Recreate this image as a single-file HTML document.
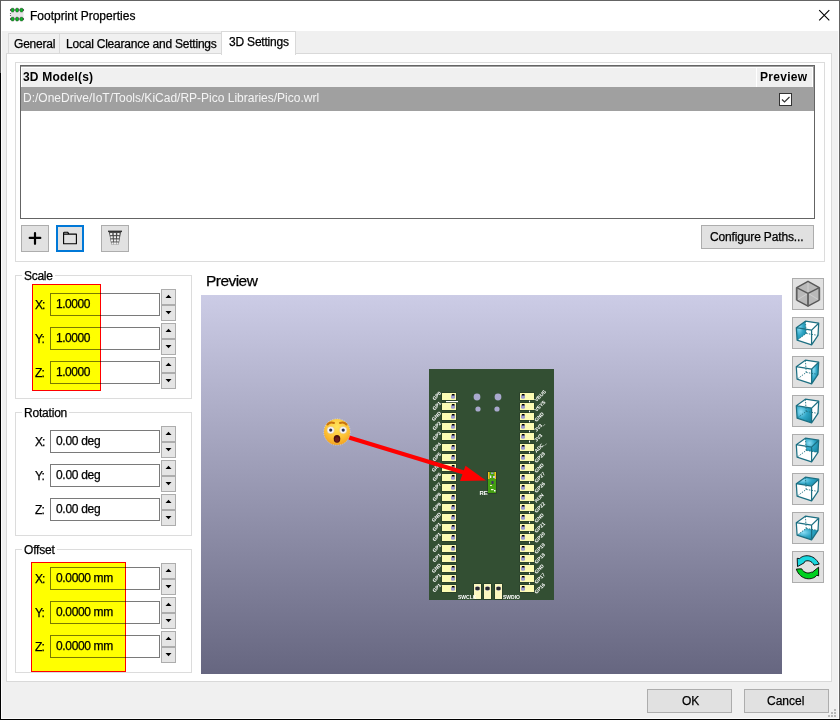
<!DOCTYPE html>
<html><head><meta charset="utf-8">
<style>
*{box-sizing:border-box;margin:0;padding:0}
html,body{width:840px;height:720px;overflow:hidden;background:#f0f0f0}
body{position:relative;font-family:"Liberation Sans",sans-serif;font-size:12px;color:#000}
.a{position:absolute}
.t{position:absolute;white-space:nowrap;line-height:14px;-webkit-text-stroke-width:0.25px}
.lbl{-webkit-text-stroke-width:0.25px}
.btn{position:absolute;background:#e1e1e1;border:1px solid #adadad}
.sbox{position:absolute;border:1px solid #dcdcdc}
.lbl{position:absolute;background:#fff;padding:0 2px;line-height:14px;white-space:nowrap}
.inp{position:absolute;background:#fff;border:1px solid #7a7a7a;width:110px;height:23px}

.hl{position:absolute;background:#ffff00;border:1px solid #ff0000;mix-blend-mode:multiply}
.tb{position:absolute;left:792px;width:32px;height:32px;background:#e1e1e1;border:1px solid #adadad}
</style></head><body>
<!-- window frame -->
<div class="a" style="left:0;top:0;width:840px;height:31px;background:#fff"></div>
<div class="a" style="left:0;top:0;width:840px;height:1px;background:#646464"></div>
<div class="a" style="left:839px;top:0;width:1px;height:720px;background:#646464"></div>
<div class="a" style="left:0;top:0;width:1px;height:73px;background:#5a5a5a"></div>
<div class="a" style="left:0;top:73px;width:1px;height:647px;background:#000"></div>
<div class="a" style="left:0;top:719px;width:840px;height:1px;background:#000"></div>
<div class="a" style="left:1px;top:31px;width:1px;height:688px;background:#fbfbfb"></div>
<div class="a" style="left:838px;top:31px;width:1px;height:688px;background:#fbfbfb"></div>
<div class="a" style="left:1px;top:718px;width:838px;height:1px;background:#fbfbfb"></div>

<!-- title icon -->
<svg class="a" style="left:9px;top:7px" width="16" height="16" viewBox="0 0 16 16">
<rect x="1.5" y="5" width="13" height="6" fill="#e6e6e6"/>
<circle cx="1.5" cy="6.5" r="0.6" fill="#555"/><circle cx="1.5" cy="8.5" r="0.6" fill="#555"/>
<path d="M0.8 3L2 2V4Z M15.2 3L14 2V4Z M0.8 12L2 11V13Z M15.2 12L14 11V13Z" fill="#3a3a3a"/>
<rect x="1" y="2.5" width="14" height="1" fill="#3a3a3a"/><rect x="1" y="11.5" width="14" height="1" fill="#3a3a3a"/>
<g fill="#00c81e" stroke="#2f3f2f" stroke-width="0.6"><rect x="2.3" y="1.3" width="2.6" height="3.6" rx="0.6"/><rect x="6.8" y="1.3" width="2.6" height="3.6" rx="0.6"/><rect x="11.2" y="1.3" width="2.6" height="3.6" rx="0.6"/>
<rect x="2.3" y="10.3" width="2.6" height="3.6" rx="0.6"/><rect x="6.8" y="10.3" width="2.6" height="3.6" rx="0.6"/><rect x="11.2" y="10.3" width="2.6" height="3.6" rx="0.6"/></g>
</svg>
<div class="t" style="left:30px;top:9px">Footprint Properties</div>
<svg class="a" style="left:818px;top:9px" width="13" height="13" viewBox="0 0 13 13"><path d="M1.2 1.2L11.3 11.3M11.3 1.2L1.2 11.3" stroke="#000" stroke-width="1.1"/></svg>

<!-- tabs -->
<div class="a" style="left:8px;top:33px;width:52px;height:21px;background:#f0f0f0;border:1px solid #d9d9d9;border-bottom:none"></div>
<div class="a" style="left:59px;top:33px;width:163px;height:21px;background:#f0f0f0;border:1px solid #d9d9d9;border-bottom:none"></div>
<div class="t" style="left:14px;top:37px;letter-spacing:-0.2px">General</div>
<div class="t" style="left:66px;top:37px;letter-spacing:-0.22px">Local Clearance and Settings</div>
<!-- panel -->
<div class="a" style="left:6px;top:53px;width:826px;height:629px;background:#fff;border:1px solid #d9d9d9"></div>
<div class="a" style="left:221px;top:31px;width:75px;height:24px;background:#fff;border:1px solid #d9d9d9;border-bottom:none"></div>
<div class="t" style="left:229px;top:35px;letter-spacing:-0.2px">3D Settings</div>

<!-- models static box -->
<div class="sbox" style="left:15px;top:62px;width:810px;height:200px"></div>
<!-- grid -->
<div class="a" style="left:20px;top:65px;width:795px;height:154px;background:#fff;border:1px solid #646464"></div>
<div class="a" style="left:21px;top:66px;width:793px;height:1px;background:#a0a0a0"></div>
<div class="a" style="left:813px;top:66px;width:1px;height:21px;background:#a0a0a0"></div>
<div class="a" style="left:22px;top:68px;width:790px;height:19px;background:#f0f0f0"></div>
<div class="a" style="left:756px;top:68px;width:1px;height:19px;background:#fff"></div>
<div class="t" style="left:23px;top:70px;font-weight:bold;letter-spacing:0.2px;-webkit-text-stroke-width:0">3D Model(s)</div>
<div class="t" style="left:760px;top:70px;font-weight:bold;letter-spacing:0.3px;-webkit-text-stroke-width:0">Preview</div>
<div class="a" style="left:21px;top:87px;width:793px;height:24px;background:#a0a0a0"></div>
<div class="t" style="left:23px;top:91px;color:#f4f4f4;-webkit-text-stroke-width:0">D:/OneDrive/IoT/Tools/KiCad/RP-Pico Libraries/Pico.wrl</div>
<div class="a" style="left:779px;top:93px;width:13px;height:13px;background:#fff;border:1px solid #333"></div>
<svg class="a" style="left:779px;top:93px" width="13" height="13" viewBox="0 0 13 13"><path d="M3 6.5L5.5 9L10.5 4" stroke="#333" stroke-width="1.2" fill="none"/></svg>

<!-- list buttons -->
<div class="btn" style="left:21px;top:225px;width:28px;height:27px"></div>
<svg class="a" style="left:21px;top:225px" width="28" height="27" viewBox="0 0 28 27"><path d="M14 8.2V18.8M8.7 12.9H19.3" stroke="#000" stroke-width="2.2" stroke-linecap="round"/></svg>
<div class="btn" style="left:56px;top:225px;width:28px;height:27px;border:2px solid #0078d7"></div>
<svg class="a" style="left:56px;top:225px" width="28" height="27" viewBox="0 0 28 27"><path d="M7.6 9.1H20.4V18.7H7.6Z M7.6 9.1V8.1Q7.6 7.3 8.4 7.3H11.8L12.9 9.1" stroke="#000" stroke-width="1.1" fill="none" stroke-linejoin="round"/></svg>
<div class="btn" style="left:101px;top:225px;width:28px;height:27px"></div>
<svg class="a" style="left:101px;top:225px" width="28" height="27" viewBox="0 0 28 27"><rect x="7" y="5.6" width="14" height="1.5" fill="#333"/><path d="M7.9 7H20.1L17.7 19.6H10.3Z" fill="#4a4a4a"/><rect x="9.1" y="8.0" width="2.2" height="2.1" fill="#eee"/><rect x="12.7" y="8.0" width="2.2" height="2.1" fill="#eee"/><rect x="16.3" y="8.0" width="2.2" height="2.1" fill="#eee"/><rect x="9.5" y="11.2" width="2.2" height="2.1" fill="#eee"/><rect x="12.8" y="11.2" width="2.2" height="2.1" fill="#eee"/><rect x="16.0" y="11.2" width="2.2" height="2.1" fill="#eee"/><rect x="9.9" y="14.4" width="2.2" height="2.1" fill="#eee"/><rect x="12.9" y="14.4" width="2.2" height="2.1" fill="#eee"/><rect x="15.7" y="14.4" width="2.2" height="2.1" fill="#eee"/><rect x="10.4" y="17.4" width="2.2" height="2.1" fill="#eee"/><rect x="12.9" y="17.4" width="2.2" height="2.1" fill="#eee"/><rect x="15.4" y="17.4" width="2.2" height="2.1" fill="#eee"/></svg>

<div class="btn" style="left:701px;top:225px;width:113px;height:24px"></div>
<div class="t" style="left:710px;top:230px;letter-spacing:-0.15px">Configure Paths...</div>

<!-- Scale -->
<div class="sbox" style="left:15px;top:275px;width:177px;height:124px"></div>
<div class="lbl" style="left:22px;top:269px;letter-spacing:-0.3px">Scale</div>
<!-- Rotation -->
<div class="sbox" style="left:15px;top:412px;width:177px;height:124px"></div>
<div class="lbl" style="left:22px;top:406px;letter-spacing:-0.2px">Rotation</div>
<!-- Offset -->
<div class="sbox" style="left:15px;top:549px;width:177px;height:124px"></div>
<div class="lbl" style="left:22px;top:543px;letter-spacing:-0.2px">Offset</div>

<div class="t" style="left:35px;top:298px;letter-spacing:-0.9px">X:</div>
<div class="inp" style="left:50px;top:293px"></div>
<div class="t" style="left:56px;top:297px;letter-spacing:-0.45px">1.0000</div>
<svg class="a" style="left:161px;top:289px" width="15" height="32" viewBox="0 0 15 32"><rect x="0.5" y="0.5" width="14" height="15" fill="#e5e5e5" stroke="#adadad"/><rect x="0.5" y="16.5" width="14" height="15" fill="#e5e5e5" stroke="#adadad"/><path d="M4.5 9H10.5L7.5 5.8Z" fill="#000"/><path d="M4.5 22H10.5L7.5 25.2Z" fill="#000"/></svg>
<div class="t" style="left:35px;top:332px;letter-spacing:-0.9px">Y:</div>
<div class="inp" style="left:50px;top:327px"></div>
<div class="t" style="left:56px;top:331px;letter-spacing:-0.45px">1.0000</div>
<svg class="a" style="left:161px;top:323px" width="15" height="32" viewBox="0 0 15 32"><rect x="0.5" y="0.5" width="14" height="15" fill="#e5e5e5" stroke="#adadad"/><rect x="0.5" y="16.5" width="14" height="15" fill="#e5e5e5" stroke="#adadad"/><path d="M4.5 9H10.5L7.5 5.8Z" fill="#000"/><path d="M4.5 22H10.5L7.5 25.2Z" fill="#000"/></svg>
<div class="t" style="left:35px;top:366px;letter-spacing:-0.9px">Z:</div>
<div class="inp" style="left:50px;top:361px"></div>
<div class="t" style="left:56px;top:365px;letter-spacing:-0.45px">1.0000</div>
<svg class="a" style="left:161px;top:357px" width="15" height="32" viewBox="0 0 15 32"><rect x="0.5" y="0.5" width="14" height="15" fill="#e5e5e5" stroke="#adadad"/><rect x="0.5" y="16.5" width="14" height="15" fill="#e5e5e5" stroke="#adadad"/><path d="M4.5 9H10.5L7.5 5.8Z" fill="#000"/><path d="M4.5 22H10.5L7.5 25.2Z" fill="#000"/></svg>
<div class="t" style="left:35px;top:435px;letter-spacing:-0.9px">X:</div>
<div class="inp" style="left:50px;top:430px"></div>
<div class="t" style="left:56px;top:434px;letter-spacing:-0.3px">0.00 deg</div>
<svg class="a" style="left:161px;top:426px" width="15" height="32" viewBox="0 0 15 32"><rect x="0.5" y="0.5" width="14" height="15" fill="#e5e5e5" stroke="#adadad"/><rect x="0.5" y="16.5" width="14" height="15" fill="#e5e5e5" stroke="#adadad"/><path d="M4.5 9H10.5L7.5 5.8Z" fill="#000"/><path d="M4.5 22H10.5L7.5 25.2Z" fill="#000"/></svg>
<div class="t" style="left:35px;top:469px;letter-spacing:-0.9px">Y:</div>
<div class="inp" style="left:50px;top:464px"></div>
<div class="t" style="left:56px;top:468px;letter-spacing:-0.3px">0.00 deg</div>
<svg class="a" style="left:161px;top:460px" width="15" height="32" viewBox="0 0 15 32"><rect x="0.5" y="0.5" width="14" height="15" fill="#e5e5e5" stroke="#adadad"/><rect x="0.5" y="16.5" width="14" height="15" fill="#e5e5e5" stroke="#adadad"/><path d="M4.5 9H10.5L7.5 5.8Z" fill="#000"/><path d="M4.5 22H10.5L7.5 25.2Z" fill="#000"/></svg>
<div class="t" style="left:35px;top:503px;letter-spacing:-0.9px">Z:</div>
<div class="inp" style="left:50px;top:498px"></div>
<div class="t" style="left:56px;top:502px;letter-spacing:-0.3px">0.00 deg</div>
<svg class="a" style="left:161px;top:494px" width="15" height="32" viewBox="0 0 15 32"><rect x="0.5" y="0.5" width="14" height="15" fill="#e5e5e5" stroke="#adadad"/><rect x="0.5" y="16.5" width="14" height="15" fill="#e5e5e5" stroke="#adadad"/><path d="M4.5 9H10.5L7.5 5.8Z" fill="#000"/><path d="M4.5 22H10.5L7.5 25.2Z" fill="#000"/></svg>
<div class="t" style="left:35px;top:572px;letter-spacing:-0.9px">X:</div>
<div class="inp" style="left:50px;top:567px"></div>
<div class="t" style="left:56px;top:571px;letter-spacing:-0.35px">0.0000 mm</div>
<svg class="a" style="left:161px;top:563px" width="15" height="32" viewBox="0 0 15 32"><rect x="0.5" y="0.5" width="14" height="15" fill="#e5e5e5" stroke="#adadad"/><rect x="0.5" y="16.5" width="14" height="15" fill="#e5e5e5" stroke="#adadad"/><path d="M4.5 9H10.5L7.5 5.8Z" fill="#000"/><path d="M4.5 22H10.5L7.5 25.2Z" fill="#000"/></svg>
<div class="t" style="left:35px;top:606px;letter-spacing:-0.9px">Y:</div>
<div class="inp" style="left:50px;top:601px"></div>
<div class="t" style="left:56px;top:605px;letter-spacing:-0.35px">0.0000 mm</div>
<svg class="a" style="left:161px;top:597px" width="15" height="32" viewBox="0 0 15 32"><rect x="0.5" y="0.5" width="14" height="15" fill="#e5e5e5" stroke="#adadad"/><rect x="0.5" y="16.5" width="14" height="15" fill="#e5e5e5" stroke="#adadad"/><path d="M4.5 9H10.5L7.5 5.8Z" fill="#000"/><path d="M4.5 22H10.5L7.5 25.2Z" fill="#000"/></svg>
<div class="t" style="left:35px;top:640px;letter-spacing:-0.9px">Z:</div>
<div class="inp" style="left:50px;top:635px"></div>
<div class="t" style="left:56px;top:639px;letter-spacing:-0.35px">0.0000 mm</div>
<svg class="a" style="left:161px;top:631px" width="15" height="32" viewBox="0 0 15 32"><rect x="0.5" y="0.5" width="14" height="15" fill="#e5e5e5" stroke="#adadad"/><rect x="0.5" y="16.5" width="14" height="15" fill="#e5e5e5" stroke="#adadad"/><path d="M4.5 9H10.5L7.5 5.8Z" fill="#000"/><path d="M4.5 22H10.5L7.5 25.2Z" fill="#000"/></svg>
<div class="hl" style="left:32px;top:284px;width:69px;height:107px"></div>
<div class="hl" style="left:31px;top:562px;width:95px;height:110px"></div>

<!-- preview -->
<div class="t" style="left:206px;top:272px;font-size:15.5px;line-height:17px;letter-spacing:-0.55px">Preview</div>
<div class="a" style="left:201px;top:295px;width:581px;height:379px;background:linear-gradient(#cccce6,#666680)"></div>

<!-- toolbar -->
<svg class="a" style="left:0;top:0" width="840" height="720" viewBox="0 0 840 720">
<defs><radialGradient id="face" cx="0.5" cy="0.3" r="0.8"><stop offset="0" stop-color="#ffe45c"/><stop offset="0.55" stop-color="#fdc236"/><stop offset="1" stop-color="#f0961a"/></radialGradient></defs>
<rect x="429" y="369" width="125" height="231" fill="#334f33"/>
<rect x="441.5" y="392.5" width="15" height="8" fill="#223622"/>
<rect x="442" y="393" width="14" height="7" fill="#fcfcb4"/>
<rect x="451" y="394.8" width="4" height="4" rx="1.3" fill="#9c9ccc"/>
<rect x="451.8" y="394" width="2.8" height="1.5" rx="0.5" fill="#000"/>
<rect x="519.5" y="392.5" width="15" height="8" fill="#223622"/>
<rect x="520" y="393" width="14" height="7" fill="#fcfcb4"/>
<rect x="521" y="394.8" width="4" height="4" rx="1.3" fill="#9c9ccc"/>
<rect x="521.8" y="394" width="2.8" height="1.5" rx="0.5" fill="#000"/>
<text x="0" y="0" transform="translate(441.5 393.5) rotate(-45)" font-size="5" font-weight="bold" fill="#fff" text-anchor="end" font-family="Liberation Sans">GP0</text>
<text x="0" y="0" transform="translate(536.5 402) rotate(-45)" font-size="5" font-weight="bold" fill="#fff" font-family="Liberation Sans">VBUS</text>
<rect x="529" y="400.6" width="1" height="2" fill="#fff"/>
<rect x="441.5" y="402.5" width="15" height="8" fill="#223622"/>
<rect x="442" y="403" width="14" height="7" fill="#fcfcb4"/>
<rect x="451" y="404.8" width="4" height="4" rx="1.3" fill="#9c9ccc"/>
<rect x="451.8" y="404" width="2.8" height="1.5" rx="0.5" fill="#000"/>
<rect x="519.5" y="402.5" width="15" height="8" fill="#223622"/>
<rect x="520" y="403" width="14" height="7" fill="#fcfcb4"/>
<rect x="521" y="404.8" width="4" height="4" rx="1.3" fill="#9c9ccc"/>
<rect x="521.8" y="404" width="2.8" height="1.5" rx="0.5" fill="#000"/>
<text x="0" y="0" transform="translate(441.5 403.5) rotate(-45)" font-size="5" font-weight="bold" fill="#fff" text-anchor="end" font-family="Liberation Sans">GP1</text>
<text x="0" y="0" transform="translate(536.5 412) rotate(-45)" font-size="5" font-weight="bold" fill="#fff" font-family="Liberation Sans">VSYS</text>
<rect x="529" y="410.6" width="1" height="2" fill="#fff"/>
<rect x="441.5" y="412.5" width="15" height="8" fill="#223622"/>
<rect x="442" y="413" width="14" height="7" fill="#fcfcb4"/>
<rect x="451" y="414.8" width="4" height="4" rx="1.3" fill="#9c9ccc"/>
<rect x="451.8" y="414" width="2.8" height="1.5" rx="0.5" fill="#000"/>
<rect x="519.5" y="412.5" width="15" height="8" fill="#223622"/>
<rect x="520" y="413" width="14" height="7" fill="#fcfcb4"/>
<rect x="521" y="414.8" width="4" height="4" rx="1.3" fill="#9c9ccc"/>
<rect x="521.8" y="414" width="2.8" height="1.5" rx="0.5" fill="#000"/>
<text x="0" y="0" transform="translate(441.5 413.5) rotate(-45)" font-size="5" font-weight="bold" fill="#fff" text-anchor="end" font-family="Liberation Sans">GND</text>
<text x="0" y="0" transform="translate(536.5 422) rotate(-45)" font-size="5" font-weight="bold" fill="#fff" font-family="Liberation Sans">GND</text>
<rect x="529" y="420.6" width="1" height="2" fill="#fff"/>
<rect x="441.5" y="422.5" width="15" height="8" fill="#223622"/>
<rect x="442" y="423" width="14" height="7" fill="#fcfcb4"/>
<rect x="451" y="424.8" width="4" height="4" rx="1.3" fill="#9c9ccc"/>
<rect x="451.8" y="424" width="2.8" height="1.5" rx="0.5" fill="#000"/>
<rect x="519.5" y="422.5" width="15" height="8" fill="#223622"/>
<rect x="520" y="423" width="14" height="7" fill="#fcfcb4"/>
<rect x="521" y="424.8" width="4" height="4" rx="1.3" fill="#9c9ccc"/>
<rect x="521.8" y="424" width="2.8" height="1.5" rx="0.5" fill="#000"/>
<text x="0" y="0" transform="translate(441.5 423.5) rotate(-45)" font-size="5" font-weight="bold" fill="#fff" text-anchor="end" font-family="Liberation Sans">GP2</text>
<text x="0" y="0" transform="translate(536.5 432) rotate(-45)" font-size="5" font-weight="bold" fill="#fff" font-family="Liberation Sans">3V3_</text>
<rect x="529" y="430.6" width="1" height="2" fill="#fff"/>
<rect x="441.5" y="432.5" width="15" height="8" fill="#223622"/>
<rect x="442" y="433" width="14" height="7" fill="#fcfcb4"/>
<rect x="451" y="434.8" width="4" height="4" rx="1.3" fill="#9c9ccc"/>
<rect x="451.8" y="434" width="2.8" height="1.5" rx="0.5" fill="#000"/>
<rect x="519.5" y="432.5" width="15" height="8" fill="#223622"/>
<rect x="520" y="433" width="14" height="7" fill="#fcfcb4"/>
<rect x="521" y="434.8" width="4" height="4" rx="1.3" fill="#9c9ccc"/>
<rect x="521.8" y="434" width="2.8" height="1.5" rx="0.5" fill="#000"/>
<text x="0" y="0" transform="translate(441.5 433.5) rotate(-45)" font-size="5" font-weight="bold" fill="#fff" text-anchor="end" font-family="Liberation Sans">GP3</text>
<text x="0" y="0" transform="translate(536.5 442) rotate(-45)" font-size="5" font-weight="bold" fill="#fff" font-family="Liberation Sans">3V3</text>
<rect x="529" y="440.6" width="1" height="2" fill="#fff"/>
<rect x="441.5" y="443.5" width="15" height="8" fill="#223622"/>
<rect x="442" y="444" width="14" height="7" fill="#fcfcb4"/>
<rect x="451" y="445.8" width="4" height="4" rx="1.3" fill="#9c9ccc"/>
<rect x="451.8" y="445" width="2.8" height="1.5" rx="0.5" fill="#000"/>
<rect x="519.5" y="443.5" width="15" height="8" fill="#223622"/>
<rect x="520" y="444" width="14" height="7" fill="#fcfcb4"/>
<rect x="521" y="445.8" width="4" height="4" rx="1.3" fill="#9c9ccc"/>
<rect x="521.8" y="445" width="2.8" height="1.5" rx="0.5" fill="#000"/>
<text x="0" y="0" transform="translate(441.5 444.5) rotate(-45)" font-size="5" font-weight="bold" fill="#fff" text-anchor="end" font-family="Liberation Sans">GP4</text>
<text x="0" y="0" transform="translate(536.5 453) rotate(-45)" font-size="5" font-weight="bold" fill="#fff" font-family="Liberation Sans">ADC_</text>
<rect x="529" y="451.6" width="1" height="2" fill="#fff"/>
<rect x="441.5" y="453.5" width="15" height="8" fill="#223622"/>
<rect x="442" y="454" width="14" height="7" fill="#fcfcb4"/>
<rect x="451" y="455.8" width="4" height="4" rx="1.3" fill="#9c9ccc"/>
<rect x="451.8" y="455" width="2.8" height="1.5" rx="0.5" fill="#000"/>
<rect x="519.5" y="453.5" width="15" height="8" fill="#223622"/>
<rect x="520" y="454" width="14" height="7" fill="#fcfcb4"/>
<rect x="521" y="455.8" width="4" height="4" rx="1.3" fill="#9c9ccc"/>
<rect x="521.8" y="455" width="2.8" height="1.5" rx="0.5" fill="#000"/>
<text x="0" y="0" transform="translate(441.5 454.5) rotate(-45)" font-size="5" font-weight="bold" fill="#fff" text-anchor="end" font-family="Liberation Sans">GP5</text>
<text x="0" y="0" transform="translate(536.5 463) rotate(-45)" font-size="5" font-weight="bold" fill="#fff" font-family="Liberation Sans">GP28</text>
<rect x="529" y="461.6" width="1" height="2" fill="#fff"/>
<rect x="441.5" y="463.5" width="15" height="8" fill="#223622"/>
<rect x="442" y="464" width="14" height="7" fill="#fcfcb4"/>
<rect x="451" y="465.8" width="4" height="4" rx="1.3" fill="#9c9ccc"/>
<rect x="451.8" y="465" width="2.8" height="1.5" rx="0.5" fill="#000"/>
<rect x="519.5" y="463.5" width="15" height="8" fill="#223622"/>
<rect x="520" y="464" width="14" height="7" fill="#fcfcb4"/>
<rect x="521" y="465.8" width="4" height="4" rx="1.3" fill="#9c9ccc"/>
<rect x="521.8" y="465" width="2.8" height="1.5" rx="0.5" fill="#000"/>
<text x="0" y="0" transform="translate(441.5 464.5) rotate(-45)" font-size="5" font-weight="bold" fill="#fff" text-anchor="end" font-family="Liberation Sans">GND</text>
<text x="0" y="0" transform="translate(536.5 473) rotate(-45)" font-size="5" font-weight="bold" fill="#fff" font-family="Liberation Sans">GND</text>
<rect x="529" y="471.6" width="1" height="2" fill="#fff"/>
<rect x="441.5" y="473.5" width="15" height="8" fill="#223622"/>
<rect x="442" y="474" width="14" height="7" fill="#fcfcb4"/>
<rect x="451" y="475.8" width="4" height="4" rx="1.3" fill="#9c9ccc"/>
<rect x="451.8" y="475" width="2.8" height="1.5" rx="0.5" fill="#000"/>
<rect x="519.5" y="473.5" width="15" height="8" fill="#223622"/>
<rect x="520" y="474" width="14" height="7" fill="#fcfcb4"/>
<rect x="521" y="475.8" width="4" height="4" rx="1.3" fill="#9c9ccc"/>
<rect x="521.8" y="475" width="2.8" height="1.5" rx="0.5" fill="#000"/>
<text x="0" y="0" transform="translate(441.5 474.5) rotate(-45)" font-size="5" font-weight="bold" fill="#fff" text-anchor="end" font-family="Liberation Sans">GP6</text>
<text x="0" y="0" transform="translate(536.5 483) rotate(-45)" font-size="5" font-weight="bold" fill="#fff" font-family="Liberation Sans">GP27</text>
<rect x="529" y="481.6" width="1" height="2" fill="#fff"/>
<rect x="441.5" y="483.5" width="15" height="8" fill="#223622"/>
<rect x="442" y="484" width="14" height="7" fill="#fcfcb4"/>
<rect x="451" y="485.8" width="4" height="4" rx="1.3" fill="#9c9ccc"/>
<rect x="451.8" y="485" width="2.8" height="1.5" rx="0.5" fill="#000"/>
<rect x="519.5" y="483.5" width="15" height="8" fill="#223622"/>
<rect x="520" y="484" width="14" height="7" fill="#fcfcb4"/>
<rect x="521" y="485.8" width="4" height="4" rx="1.3" fill="#9c9ccc"/>
<rect x="521.8" y="485" width="2.8" height="1.5" rx="0.5" fill="#000"/>
<text x="0" y="0" transform="translate(441.5 484.5) rotate(-45)" font-size="5" font-weight="bold" fill="#fff" text-anchor="end" font-family="Liberation Sans">GP7</text>
<text x="0" y="0" transform="translate(536.5 493) rotate(-45)" font-size="5" font-weight="bold" fill="#fff" font-family="Liberation Sans">GP26</text>
<rect x="529" y="491.6" width="1" height="2" fill="#fff"/>
<rect x="441.5" y="493.5" width="15" height="8" fill="#223622"/>
<rect x="442" y="494" width="14" height="7" fill="#fcfcb4"/>
<rect x="451" y="495.8" width="4" height="4" rx="1.3" fill="#9c9ccc"/>
<rect x="451.8" y="495" width="2.8" height="1.5" rx="0.5" fill="#000"/>
<rect x="519.5" y="493.5" width="15" height="8" fill="#223622"/>
<rect x="520" y="494" width="14" height="7" fill="#fcfcb4"/>
<rect x="521" y="495.8" width="4" height="4" rx="1.3" fill="#9c9ccc"/>
<rect x="521.8" y="495" width="2.8" height="1.5" rx="0.5" fill="#000"/>
<text x="0" y="0" transform="translate(441.5 494.5) rotate(-45)" font-size="5" font-weight="bold" fill="#fff" text-anchor="end" font-family="Liberation Sans">GP8</text>
<text x="0" y="0" transform="translate(536.5 503) rotate(-45)" font-size="5" font-weight="bold" fill="#fff" font-family="Liberation Sans">RUN</text>
<rect x="529" y="501.6" width="1" height="2" fill="#fff"/>
<rect x="441.5" y="503.5" width="15" height="8" fill="#223622"/>
<rect x="442" y="504" width="14" height="7" fill="#fcfcb4"/>
<rect x="451" y="505.8" width="4" height="4" rx="1.3" fill="#9c9ccc"/>
<rect x="451.8" y="505" width="2.8" height="1.5" rx="0.5" fill="#000"/>
<rect x="519.5" y="503.5" width="15" height="8" fill="#223622"/>
<rect x="520" y="504" width="14" height="7" fill="#fcfcb4"/>
<rect x="521" y="505.8" width="4" height="4" rx="1.3" fill="#9c9ccc"/>
<rect x="521.8" y="505" width="2.8" height="1.5" rx="0.5" fill="#000"/>
<text x="0" y="0" transform="translate(441.5 504.5) rotate(-45)" font-size="5" font-weight="bold" fill="#fff" text-anchor="end" font-family="Liberation Sans">GP9</text>
<text x="0" y="0" transform="translate(536.5 513) rotate(-45)" font-size="5" font-weight="bold" fill="#fff" font-family="Liberation Sans">GP22</text>
<rect x="529" y="511.6" width="1" height="2" fill="#fff"/>
<rect x="441.5" y="513.5" width="15" height="8" fill="#223622"/>
<rect x="442" y="514" width="14" height="7" fill="#fcfcb4"/>
<rect x="451" y="515.8" width="4" height="4" rx="1.3" fill="#9c9ccc"/>
<rect x="451.8" y="515" width="2.8" height="1.5" rx="0.5" fill="#000"/>
<rect x="519.5" y="513.5" width="15" height="8" fill="#223622"/>
<rect x="520" y="514" width="14" height="7" fill="#fcfcb4"/>
<rect x="521" y="515.8" width="4" height="4" rx="1.3" fill="#9c9ccc"/>
<rect x="521.8" y="515" width="2.8" height="1.5" rx="0.5" fill="#000"/>
<text x="0" y="0" transform="translate(441.5 514.5) rotate(-45)" font-size="5" font-weight="bold" fill="#fff" text-anchor="end" font-family="Liberation Sans">GND</text>
<text x="0" y="0" transform="translate(536.5 523) rotate(-45)" font-size="5" font-weight="bold" fill="#fff" font-family="Liberation Sans">GND</text>
<rect x="529" y="521.6" width="1" height="2" fill="#fff"/>
<rect x="441.5" y="523.5" width="15" height="8" fill="#223622"/>
<rect x="442" y="524" width="14" height="7" fill="#fcfcb4"/>
<rect x="451" y="525.8" width="4" height="4" rx="1.3" fill="#9c9ccc"/>
<rect x="451.8" y="525" width="2.8" height="1.5" rx="0.5" fill="#000"/>
<rect x="519.5" y="523.5" width="15" height="8" fill="#223622"/>
<rect x="520" y="524" width="14" height="7" fill="#fcfcb4"/>
<rect x="521" y="525.8" width="4" height="4" rx="1.3" fill="#9c9ccc"/>
<rect x="521.8" y="525" width="2.8" height="1.5" rx="0.5" fill="#000"/>
<text x="0" y="0" transform="translate(441.5 524.5) rotate(-45)" font-size="5" font-weight="bold" fill="#fff" text-anchor="end" font-family="Liberation Sans">GP1</text>
<text x="0" y="0" transform="translate(536.5 533) rotate(-45)" font-size="5" font-weight="bold" fill="#fff" font-family="Liberation Sans">GP21</text>
<rect x="529" y="531.6" width="1" height="2" fill="#fff"/>
<rect x="441.5" y="533.5" width="15" height="8" fill="#223622"/>
<rect x="442" y="534" width="14" height="7" fill="#fcfcb4"/>
<rect x="451" y="535.8" width="4" height="4" rx="1.3" fill="#9c9ccc"/>
<rect x="451.8" y="535" width="2.8" height="1.5" rx="0.5" fill="#000"/>
<rect x="519.5" y="533.5" width="15" height="8" fill="#223622"/>
<rect x="520" y="534" width="14" height="7" fill="#fcfcb4"/>
<rect x="521" y="535.8" width="4" height="4" rx="1.3" fill="#9c9ccc"/>
<rect x="521.8" y="535" width="2.8" height="1.5" rx="0.5" fill="#000"/>
<text x="0" y="0" transform="translate(441.5 534.5) rotate(-45)" font-size="5" font-weight="bold" fill="#fff" text-anchor="end" font-family="Liberation Sans">GP1</text>
<text x="0" y="0" transform="translate(536.5 543) rotate(-45)" font-size="5" font-weight="bold" fill="#fff" font-family="Liberation Sans">GP20</text>
<rect x="529" y="541.6" width="1" height="2" fill="#fff"/>
<rect x="441.5" y="544.5" width="15" height="8" fill="#223622"/>
<rect x="442" y="545" width="14" height="7" fill="#fcfcb4"/>
<rect x="451" y="546.8" width="4" height="4" rx="1.3" fill="#9c9ccc"/>
<rect x="451.8" y="546" width="2.8" height="1.5" rx="0.5" fill="#000"/>
<rect x="519.5" y="544.5" width="15" height="8" fill="#223622"/>
<rect x="520" y="545" width="14" height="7" fill="#fcfcb4"/>
<rect x="521" y="546.8" width="4" height="4" rx="1.3" fill="#9c9ccc"/>
<rect x="521.8" y="546" width="2.8" height="1.5" rx="0.5" fill="#000"/>
<text x="0" y="0" transform="translate(441.5 545.5) rotate(-45)" font-size="5" font-weight="bold" fill="#fff" text-anchor="end" font-family="Liberation Sans">GP1</text>
<text x="0" y="0" transform="translate(536.5 554) rotate(-45)" font-size="5" font-weight="bold" fill="#fff" font-family="Liberation Sans">GP19</text>
<rect x="529" y="552.6" width="1" height="2" fill="#fff"/>
<rect x="441.5" y="554.5" width="15" height="8" fill="#223622"/>
<rect x="442" y="555" width="14" height="7" fill="#fcfcb4"/>
<rect x="451" y="556.8" width="4" height="4" rx="1.3" fill="#9c9ccc"/>
<rect x="451.8" y="556" width="2.8" height="1.5" rx="0.5" fill="#000"/>
<rect x="519.5" y="554.5" width="15" height="8" fill="#223622"/>
<rect x="520" y="555" width="14" height="7" fill="#fcfcb4"/>
<rect x="521" y="556.8" width="4" height="4" rx="1.3" fill="#9c9ccc"/>
<rect x="521.8" y="556" width="2.8" height="1.5" rx="0.5" fill="#000"/>
<text x="0" y="0" transform="translate(441.5 555.5) rotate(-45)" font-size="5" font-weight="bold" fill="#fff" text-anchor="end" font-family="Liberation Sans">GP1</text>
<text x="0" y="0" transform="translate(536.5 564) rotate(-45)" font-size="5" font-weight="bold" fill="#fff" font-family="Liberation Sans">GP18</text>
<rect x="529" y="562.6" width="1" height="2" fill="#fff"/>
<rect x="441.5" y="564.5" width="15" height="8" fill="#223622"/>
<rect x="442" y="565" width="14" height="7" fill="#fcfcb4"/>
<rect x="451" y="566.8" width="4" height="4" rx="1.3" fill="#9c9ccc"/>
<rect x="451.8" y="566" width="2.8" height="1.5" rx="0.5" fill="#000"/>
<rect x="519.5" y="564.5" width="15" height="8" fill="#223622"/>
<rect x="520" y="565" width="14" height="7" fill="#fcfcb4"/>
<rect x="521" y="566.8" width="4" height="4" rx="1.3" fill="#9c9ccc"/>
<rect x="521.8" y="566" width="2.8" height="1.5" rx="0.5" fill="#000"/>
<text x="0" y="0" transform="translate(441.5 565.5) rotate(-45)" font-size="5" font-weight="bold" fill="#fff" text-anchor="end" font-family="Liberation Sans">GND</text>
<text x="0" y="0" transform="translate(536.5 574) rotate(-45)" font-size="5" font-weight="bold" fill="#fff" font-family="Liberation Sans">GND</text>
<rect x="529" y="572.6" width="1" height="2" fill="#fff"/>
<rect x="441.5" y="574.5" width="15" height="8" fill="#223622"/>
<rect x="442" y="575" width="14" height="7" fill="#fcfcb4"/>
<rect x="451" y="576.8" width="4" height="4" rx="1.3" fill="#9c9ccc"/>
<rect x="451.8" y="576" width="2.8" height="1.5" rx="0.5" fill="#000"/>
<rect x="519.5" y="574.5" width="15" height="8" fill="#223622"/>
<rect x="520" y="575" width="14" height="7" fill="#fcfcb4"/>
<rect x="521" y="576.8" width="4" height="4" rx="1.3" fill="#9c9ccc"/>
<rect x="521.8" y="576" width="2.8" height="1.5" rx="0.5" fill="#000"/>
<text x="0" y="0" transform="translate(441.5 575.5) rotate(-45)" font-size="5" font-weight="bold" fill="#fff" text-anchor="end" font-family="Liberation Sans">GP1</text>
<text x="0" y="0" transform="translate(536.5 584) rotate(-45)" font-size="5" font-weight="bold" fill="#fff" font-family="Liberation Sans">GP17</text>
<rect x="529" y="582.6" width="1" height="2" fill="#fff"/>
<rect x="441.5" y="584.5" width="15" height="8" fill="#223622"/>
<rect x="442" y="585" width="14" height="7" fill="#fcfcb4"/>
<rect x="451" y="586.8" width="4" height="4" rx="1.3" fill="#9c9ccc"/>
<rect x="451.8" y="586" width="2.8" height="1.5" rx="0.5" fill="#000"/>
<rect x="519.5" y="584.5" width="15" height="8" fill="#223622"/>
<rect x="520" y="585" width="14" height="7" fill="#fcfcb4"/>
<rect x="521" y="586.8" width="4" height="4" rx="1.3" fill="#9c9ccc"/>
<rect x="521.8" y="586" width="2.8" height="1.5" rx="0.5" fill="#000"/>
<text x="0" y="0" transform="translate(441.5 585.5) rotate(-45)" font-size="5" font-weight="bold" fill="#fff" text-anchor="end" font-family="Liberation Sans">GP1</text>
<text x="0" y="0" transform="translate(536.5 594) rotate(-45)" font-size="5" font-weight="bold" fill="#fff" font-family="Liberation Sans">GP16</text>
<rect x="446" y="401" width="12" height="1.2" fill="#fff"/>
<circle cx="477" cy="397" r="3.4" fill="#a9a9cd"/>
<circle cx="498" cy="397" r="3.4" fill="#a9a9cd"/>
<circle cx="478" cy="409" r="2.6" fill="#a9a9cd"/>
<circle cx="497" cy="409" r="2.6" fill="#a9a9cd"/>
<rect x="473.5" y="583.5" width="8" height="16" fill="#1f331f"/>
<rect x="474" y="584" width="7" height="15" fill="#fbf7c0"/>
<circle cx="477.5" cy="588.5" r="2.2" fill="#7a7aa0"/>
<rect x="475.5" y="587" width="4" height="3" fill="#111" opacity="0.8"/>
<rect x="483.5" y="583.5" width="8" height="16" fill="#1f331f"/>
<rect x="484" y="584" width="7" height="15" fill="#fbf7c0"/>
<circle cx="487.5" cy="588.5" r="2.2" fill="#7a7aa0"/>
<rect x="485.5" y="587" width="4" height="3" fill="#111" opacity="0.8"/>
<rect x="494.5" y="583.5" width="8" height="16" fill="#1f331f"/>
<rect x="495" y="584" width="7" height="15" fill="#fbf7c0"/>
<circle cx="498.5" cy="588.5" r="2.2" fill="#7a7aa0"/>
<rect x="496.5" y="587" width="4" height="3" fill="#111" opacity="0.8"/>
<text x="458" y="599" font-size="5" font-weight="bold" fill="#fff" font-family="Liberation Sans">SWCLK</text>
<text x="503" y="599" font-size="5" font-weight="bold" fill="#fff" font-family="Liberation Sans">SWDIO</text>
<rect x="487.5" y="471.5" width="9" height="22" fill="#1f331f"/>
<rect x="488" y="472" width="8" height="21" fill="#44a012"/>
<rect x="488" y="472" width="1.5" height="7" fill="#f0c020"/><rect x="494.5" y="472" width="1.5" height="7" fill="#f0c020"/>
<rect x="491" y="472.5" width="2.5" height="1.5" fill="#a0a0c8"/>
<rect x="491.5" y="481" width="2" height="3" fill="#40306a"/>
<rect x="490" y="475.5" width="1.3" height="2.5" fill="#f0f0e0"/><rect x="493" y="476" width="2" height="2" fill="#c8c8e0"/>
<rect x="490" y="485" width="2" height="1" fill="#f5f0c0"/><rect x="491" y="489" width="2.5" height="1.2" fill="#f5f5e5"/>
<rect x="494" y="490" width="1.5" height="1.5" fill="#fff"/>
<text x="479.5" y="495" font-size="6" font-weight="bold" fill="#fff" font-family="Liberation Sans">RE</text>
<path d="M349 437.5L472 475" stroke="#ff0000" stroke-width="4.2" stroke-linecap="butt"/>
<path d="M465.5 465.8L486 480.6L460 481Z" fill="#ff0000"/>
<circle cx="337" cy="432" r="13.1" fill="url(#face)"/>
<circle cx="337" cy="432" r="13.3" fill="none" stroke="#fff6d8" stroke-width="0.7" stroke-dasharray="0.8 1.6" opacity="0.8"/>
<path d="M327.5 424.5Q330 421.5 334 423" stroke="#c9740e" stroke-width="2" fill="none" stroke-linecap="round"/>
<path d="M340 423Q344 421.5 346.5 424.5" stroke="#c9740e" stroke-width="2" fill="none" stroke-linecap="round"/>
<circle cx="330.7" cy="430.1" r="3.7" fill="#f4f4f8" stroke="#e8c070" stroke-width="0.5"/>
<circle cx="330.7" cy="430.1" r="1.6" fill="#2a3050"/>
<circle cx="343.2" cy="430.1" r="3.7" fill="#f4f4f8" stroke="#e8c070" stroke-width="0.5"/>
<circle cx="343.2" cy="430.1" r="1.6" fill="#2a3050"/>
<ellipse cx="337" cy="438.8" rx="3.3" ry="3.9" fill="#4a1010"/><ellipse cx="337" cy="439.6" rx="2.2" ry="2.5" fill="#6a1c1c"/>
</svg>
<svg width="0" height="0" style="position:absolute"><defs><radialGradient id="tg" cx="0.3" cy="0.35" r="0.9"><stop offset="0" stop-color="#8adcf4"/><stop offset="0.45" stop-color="#2fa6c6"/><stop offset="1" stop-color="#137f9a"/></radialGradient></defs></svg>
<div class="tb" style="top:278px"></div>
<svg class="a" style="left:792px;top:278px" width="32" height="32" viewBox="0 0 32 32"><path d="M16 3.3L27.3 9.6V22.2L16 28.2L4.7 22.2V9.6Z" fill="#b9b9b9"/><path d="M16 3.3V15.3M4.7 22.2L16 15.3L27.3 22.2" stroke="#d4d4d4" stroke-width="0.8" fill="none"/><path d="M16 3.3L27.3 9.6L16 15.3L4.7 9.6Z M4.7 22.2L16 28.2L27.3 22.2" stroke="#585858" stroke-width="1.35" fill="none" stroke-linejoin="round"/><path d="M4.7 9.6V22.2M16 15.3V28.2M27.3 9.6V22.2" stroke="#606060" stroke-width="1.8" fill="none"/></svg>
<div class="tb" style="top:317px"></div>
<svg class="a" style="left:792px;top:317px" width="32" height="32" viewBox="0 0 32 32"><path d="M4.3 10.7 L13.4 4.2 L26.7 6.2 L26 18.4 L19.6 27.8 L5.1 23.2Z" fill="#fff"/><path d="M13.4 4.2 L4.3 10.7 L5.1 23.2 L14.2 16.4Z" fill="url(#tg)"/><path d="M13.4 4.2L14.2 16.4L5.1 23.2M14.2 16.4L26 18.4" stroke="#1f7080" stroke-width="0.9" stroke-dasharray="1.5 1.2" fill="none"/><path d="M4.3 10.7 L13.4 4.2 L26.7 6.2 L26 18.4 L19.6 27.8 L5.1 23.2Z M4.3 10.7L19.6 13.1L26.7 6.2M19.6 13.1L19.6 27.8" stroke="#1c6f82" stroke-width="1.25" fill="none" stroke-linejoin="round"/></svg>
<div class="tb" style="top:356px"></div>
<svg class="a" style="left:792px;top:356px" width="32" height="32" viewBox="0 0 32 32"><path d="M4.3 10.7 L13.4 4.2 L26.7 6.2 L26 18.4 L19.6 27.8 L5.1 23.2Z" fill="#fff"/><path d="M19.6 13.1 L26.7 6.2 L26 18.4 L19.6 27.8Z" fill="url(#tg)"/><path d="M13.4 4.2L14.2 16.4L5.1 23.2M14.2 16.4L26 18.4" stroke="#1f7080" stroke-width="0.9" stroke-dasharray="1.5 1.2" fill="none"/><path d="M4.3 10.7 L13.4 4.2 L26.7 6.2 L26 18.4 L19.6 27.8 L5.1 23.2Z M4.3 10.7L19.6 13.1L26.7 6.2M19.6 13.1L19.6 27.8" stroke="#1c6f82" stroke-width="1.25" fill="none" stroke-linejoin="round"/></svg>
<div class="tb" style="top:395px"></div>
<svg class="a" style="left:792px;top:395px" width="32" height="32" viewBox="0 0 32 32"><path d="M4.3 10.7 L13.4 4.2 L26.7 6.2 L26 18.4 L19.6 27.8 L5.1 23.2Z" fill="#fff"/><path d="M4.3 10.7 L19.6 13.1 L19.6 27.8 L5.1 23.2Z" fill="url(#tg)"/><path d="M13.4 4.2L14.2 16.4L5.1 23.2M14.2 16.4L26 18.4" stroke="#1f7080" stroke-width="0.9" stroke-dasharray="1.5 1.2" fill="none"/><path d="M4.3 10.7 L13.4 4.2 L26.7 6.2 L26 18.4 L19.6 27.8 L5.1 23.2Z M4.3 10.7L19.6 13.1L26.7 6.2M19.6 13.1L19.6 27.8" stroke="#1c6f82" stroke-width="1.25" fill="none" stroke-linejoin="round"/></svg>
<div class="tb" style="top:434px"></div>
<svg class="a" style="left:792px;top:434px" width="32" height="32" viewBox="0 0 32 32"><path d="M4.3 10.7 L13.4 4.2 L26.7 6.2 L26 18.4 L19.6 27.8 L5.1 23.2Z" fill="#fff"/><path d="M13.4 4.2 L26.7 6.2 L26 18.4 L14.2 16.4Z" fill="url(#tg)"/><path d="M13.4 4.2L14.2 16.4L5.1 23.2M14.2 16.4L26 18.4" stroke="#1f7080" stroke-width="0.9" stroke-dasharray="1.5 1.2" fill="none"/><path d="M4.3 10.7 L13.4 4.2 L26.7 6.2 L26 18.4 L19.6 27.8 L5.1 23.2Z M4.3 10.7L19.6 13.1L26.7 6.2M19.6 13.1L19.6 27.8" stroke="#1c6f82" stroke-width="1.25" fill="none" stroke-linejoin="round"/></svg>
<div class="tb" style="top:473px"></div>
<svg class="a" style="left:792px;top:473px" width="32" height="32" viewBox="0 0 32 32"><path d="M4.3 10.7 L13.4 4.2 L26.7 6.2 L26 18.4 L19.6 27.8 L5.1 23.2Z" fill="#fff"/><path d="M13.4 4.2 L26.7 6.2 L19.6 13.1 L4.3 10.7Z" fill="url(#tg)"/><path d="M13.4 4.2L14.2 16.4L5.1 23.2M14.2 16.4L26 18.4" stroke="#1f7080" stroke-width="0.9" stroke-dasharray="1.5 1.2" fill="none"/><path d="M4.3 10.7 L13.4 4.2 L26.7 6.2 L26 18.4 L19.6 27.8 L5.1 23.2Z M4.3 10.7L19.6 13.1L26.7 6.2M19.6 13.1L19.6 27.8" stroke="#1c6f82" stroke-width="1.25" fill="none" stroke-linejoin="round"/></svg>
<div class="tb" style="top:512px"></div>
<svg class="a" style="left:792px;top:512px" width="32" height="32" viewBox="0 0 32 32"><path d="M4.3 10.7 L13.4 4.2 L26.7 6.2 L26 18.4 L19.6 27.8 L5.1 23.2Z" fill="#fff"/><path d="M14.2 16.4 L5.1 23.2 L19.6 27.8 L26 18.4Z" fill="url(#tg)"/><path d="M13.4 4.2L14.2 16.4L5.1 23.2M14.2 16.4L26 18.4" stroke="#1f7080" stroke-width="0.9" stroke-dasharray="1.5 1.2" fill="none"/><path d="M4.3 10.7 L13.4 4.2 L26.7 6.2 L26 18.4 L19.6 27.8 L5.1 23.2Z M4.3 10.7L19.6 13.1L26.7 6.2M19.6 13.1L19.6 27.8" stroke="#1c6f82" stroke-width="1.25" fill="none" stroke-linejoin="round"/></svg>
<div class="tb" style="top:551px"></div>
<svg class="a" style="left:792px;top:551px" width="32" height="32" viewBox="0 0 32 32"><path d="M5.2 7.3L7.7 7.6C11 3.8 21.5 2.2 27.2 13.1L22.1 14.2C19.8 9.6 15.2 8.9 12.6 10.6L12.2 11.8L5.5 15.6Z" fill="#1ad8e0" stroke="#000" stroke-width="0.9" stroke-linejoin="round"/><path d="M4.3 18.1L9.6 17.8C11.5 21.8 17 23.2 19.4 20.9L19.9 21.6L26.6 16.2V24.9L24.9 24.2C21 29.5 8.5 30 4.3 18.1Z" fill="#00d020" stroke="#000" stroke-width="0.9" stroke-linejoin="round"/></svg>

<!-- bottom buttons -->
<div class="btn" style="left:647px;top:689px;width:85px;height:24px"></div>
<div class="t" style="left:682px;top:694px">OK</div>
<div class="btn" style="left:744px;top:689px;width:85px;height:24px"></div>
<div class="t" style="left:767px;top:694px">Cancel</div>
<svg class="a" style="left:827px;top:708px" width="11" height="11"><g fill="#b8b8b8"><rect x="7" y="1" width="2" height="2"/><rect x="4" y="4" width="2" height="2"/><rect x="7" y="4" width="2" height="2"/><rect x="1" y="7" width="2" height="2"/><rect x="4" y="7" width="2" height="2"/><rect x="7" y="7" width="2" height="2"/></g></svg>
</body></html>
